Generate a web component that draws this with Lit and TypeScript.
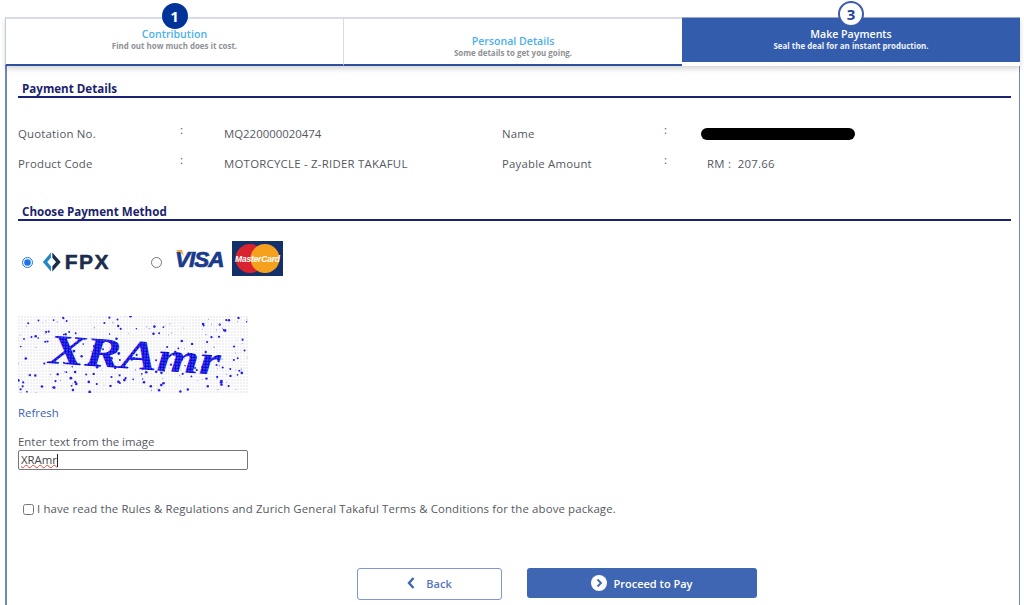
import { LitElement, html, css, svg } from "lit";
import { customElement } from "lit/decorators.js";

function dots() {
  let s = 7;
  const r = () => ((s = (s * 16807) % 2147483647) / 2147483647);
  const out = [];
  for (let i = 0; i < 260; i++) {
    const x = r() * 230;
    const y = r() * 77;
    const b = r();
    out.push(svg`<circle cx=${x.toFixed(1)} cy=${y.toFixed(1)} r=${(0.4 + b * 1).toFixed(1)} fill=${b > 0.4 ? "#2020e8" : "#9a9af0"}></circle>`);
  }
  return out;
}

@customElement("app-root")
export class AppRoot extends LitElement {
  static styles = css`
    :host { display: block; width: 1024px; height: 605px; overflow: hidden; background: #fff; font-family: "Open Sans", "Noto Sans", sans-serif; color: #55595f; font-size: 11.4px; }
    .page { display: flex; flex-direction: column; height: 605px; padding: 17px 4px 0 5px; box-sizing: border-box; }
    .tabs { display: grid; grid-template-columns: 338px 339px 338px; height: 49px; flex: none; box-shadow: 0 3px 5px rgba(0,0,0,.16); position: relative; z-index: 1; }
    .tab { position: relative; box-sizing: border-box; border: 1px solid #d9dde3; border-top-width: 2px; border-bottom: 2px solid #2f4f9f; border-right: 0; text-align: center; display: flex; flex-direction: column; align-items: center; }
    .tab.first { padding-top: 8px; border-left-color: #c4cbd8; }
    .tab.second { padding-top: 15px; }
    .tab.active { background: #fff; border: 0; padding-top: 0; }
    .fill { width: 100%; height: 45px; background: #335cad; box-sizing: border-box; padding-top: 9px; color: #fff; border-top: 1px solid #9aa9c9; }
    .tt { font-size: 10.6px; line-height: 14px; font-weight: 600; color: #4bb0ec; }
    .st { font-size: 7.95px; line-height: 10px; font-weight: 700; color: #8f9195; }
    .fill .tt, .fill .st { color: #fff; }
    .fill .st { color: #eef2fa; }
    .badge { position: absolute; top: -16px; left: 50%; margin-left: -13px; width: 26px; height: 26px; box-sizing: border-box; border-radius: 50%; display: flex; align-items: center; justify-content: center; font-weight: 700; font-size: 15px; }
    .badge.on { background: #003399; color: #fff; }
    .badge.cur { background: #fff; color: #23479b; border: 2px solid #3a5cab; }
    .body { flex: 1; border-left: 2px solid #6d86c4; border-right: 1px solid #6d86c4; padding: 14px 8px 0 11px; box-sizing: border-box; }
    h2 { margin: 0; padding: 0 0 0 4px; font-size: 11.6px; line-height: 18px; height: 16px; font-weight: 700; color: #1b1f6d; border-bottom: 2px solid #1b2378; }
    .details { display: grid; grid-template-columns: 162px 44px 278px 162px 37px 1fr; grid-auto-rows: 30px; margin-top: 21px; height: 84px; }
    .cell { line-height: 30px; height: 30px; white-space: nowrap; }
    .key { letter-spacing: .2px; }
    .wide { letter-spacing: .25px; }
    .colon { line-height: 21px; height: 30px; }
    .mask { display: block; width: 154px; height: 12px; border-radius: 6px; background: #000; margin-top: 9px; }
    .amt { padding-left: 6px; letter-spacing: .25px; }
    .methods { display: flex; align-items: center; height: 42px; margin-top: 20px; padding-left: 4px; }
    input[type=radio] { margin: 0; width: 11px; height: 11px; accent-color: #1a73e8; flex: none; }
    .fpx { display: flex; align-items: center; margin: 0 41px 0 9px; width: 68px; }
    .fpxt { font-family: "Liberation Sans", sans-serif; font-weight: 700; font-size: 21px; letter-spacing: 1.5px; color: #1c2c4c; -webkit-text-stroke: .5px #1c2c4c; margin-left: 2px; }
    .visa { position: relative; font-family: "Liberation Sans", sans-serif; font-style: italic; font-weight: 700; font-size: 22.5px; letter-spacing: -1px; color: #1a3a8c; margin: -5px 8px 0 13px; width: 49px; -webkit-text-stroke: .7px #1a3a8c; }
    .swoosh { position: absolute; left: 0; top: 3px; }
    .mc { flex: none; margin-top: -7px; }
    .captcha { display: block; width: 230px; height: 77px; margin-top: 33px; }
    .refresh { display: block; margin-top: 12px; line-height: 16px; color: #3d5fb0; text-decoration: none; }
    .lbl { margin-top: 13px; line-height: 16px; }
    .field { box-sizing: border-box; width: 230px; height: 20px; border: 1px solid #777; border-radius: 2px; padding-left: 2px; line-height: 18px; display: flex; align-items: center; color: #444; }
    .field span { text-decoration: underline wavy #e0453a 1px; text-underline-offset: 0; }
    .field i { width: 1px; height: 13px; background: #222; display: block; }
    .agree { display: flex; align-items: center; margin-top: 31px; padding-left: 5px; line-height: 16px; letter-spacing: .14px; }
    .agree input { margin: 0 3px 0 0; width: 11px; height: 11px; flex: none; }
    .actions { display: flex; gap: 25px; margin-top: 51px; padding-left: 339px; align-items: flex-start; }
    .btn { box-sizing: border-box; border-radius: 3px; font-family: inherit; font-size: 11px; font-weight: 600; display: flex; align-items: center; justify-content: center; gap: 11px; padding: 0; }
    .back { width: 145px; height: 32px; background: #fff; border: 1px solid #7d97d4; color: #5a76ba; padding-bottom: 2px; }
    .go { width: 230px; height: 30px; background: #3f66b3; border: 0; color: #fff; gap: 6px; }
  `;

  render() {
    return html`<div class="page">
      <div class="tabs">
        <div class="tab first"><span class="badge on">1</span><div class="tt">Contribution</div><div class="st">Find out how much does it cost.</div></div>
        <div class="tab second"><div class="tt">Personal Details</div><div class="st">Some details to get you going.</div></div>
        <div class="tab active"><span class="badge cur">3</span><div class="fill"><div class="tt">Make Payments</div><div class="st">Seal the deal for an instant production.</div></div></div>
      </div>
      <div class="body">
        <h2>Payment Details</h2>
        <div class="details">
          <div class="cell key">Quotation No.</div><div class="cell colon">:</div><div class="cell">MQ220000020474</div>
          <div class="cell key">Name</div><div class="cell colon">:</div><div class="cell"><span class="mask"></span></div>
          <div class="cell key">Product Code</div><div class="cell colon">:</div><div class="cell wide">MOTORCYCLE - Z-RIDER TAKAFUL</div>
          <div class="cell key">Payable Amount</div><div class="cell colon">:</div><div class="cell"><span class="amt">RM :&nbsp; 207.66</span></div>
        </div>
        <h2>Choose Payment Method</h2>
        <div class="methods">
          <input type="radio" name="pay" checked />
          <div class="fpx">
            <svg width="22" height="20" viewBox="0 0 22 20"><path d="M9.500 0 1 10l8.500 10V14.500L5.500 10 9.500 5.500Z" fill="#1e88c7"></path><path d="M11 0l9 10-9 10v-5.500L15 10 11 5.500Z" fill="#1c2c4c"></path></svg>
            <span class="fpxt">FPX</span>
          </div>
          <input type="radio" name="pay" />
          <span class="visa">VISA<svg class="swoosh" width="9" height="7" viewBox="0 0 9 7"><path d="M0 0h7l2 6C7 3 4 1 0 0Z" fill="#f2a72e"></path></svg></span>
          <svg class="mc" width="51" height="35" viewBox="0 0 51 35">
            <rect width="51" height="35" fill="#14306b"></rect>
            <circle cx="18" cy="17.500" r="14.500" fill="#d9232e"></circle>
            <circle cx="33" cy="17.500" r="14.500" fill="#f6a11e"></circle>
            <text x="25.500" y="20.500" text-anchor="middle" font-family="Liberation Sans" font-size="8.500" font-weight="700" font-style="italic" fill="#fff" textLength="45">MasterCard</text>
          </svg>
        </div>
        <svg class="captcha" viewBox="0 0 230 77">
          <defs>
            <pattern id="bg" width="3" height="3" patternUnits="userSpaceOnUse"><circle cx="1" cy="1" r=".7" fill="#d8d8e4"></circle></pattern>
            <pattern id="st" width="3" height="3" patternUnits="userSpaceOnUse"><rect width="3" height="3" fill="#6a6af2"></rect><circle cx="1.500" cy="1.500" r="1.400" fill="#0000dc"></circle></pattern>
          </defs>
          <rect width="230" height="77" fill="url(#bg)"></rect>
          ${dots()}
          <text x="30" y="47" transform="rotate(4 30 47)" font-family="Liberation Serif" font-style="italic" font-weight="700" font-size="42" fill="url(#st)" textLength="172" lengthAdjust="spacingAndGlyphs">XRAmr</text>
        </svg>
        <a class="refresh" href="#">Refresh</a>
        <div class="lbl">Enter text from the image</div>
        <div class="field"><span>XRAmr</span><i></i></div>
        <label class="agree"><input type="checkbox" />I have read the Rules &amp; Regulations and Zurich General Takaful Terms &amp; Conditions for the above package.</label>
        <div class="actions">
          <button class="btn back"><svg width="8" height="12" viewBox="0 0 8 12"><path d="M6.500 1 2 6l4.500 5" fill="none" stroke="#3f66b3" stroke-width="2.400"></path></svg>Back</button>
          <button class="btn go"><svg width="16" height="16" viewBox="0 0 16 16"><circle cx="8" cy="8" r="8" fill="#fff"></circle><path d="M6.500 4.500 10 8l-3.500 3.500" fill="none" stroke="#3f66b3" stroke-width="1.800"></path></svg>Proceed to Pay</button>
        </div>
      </div>
    </div>`;
  }
}
